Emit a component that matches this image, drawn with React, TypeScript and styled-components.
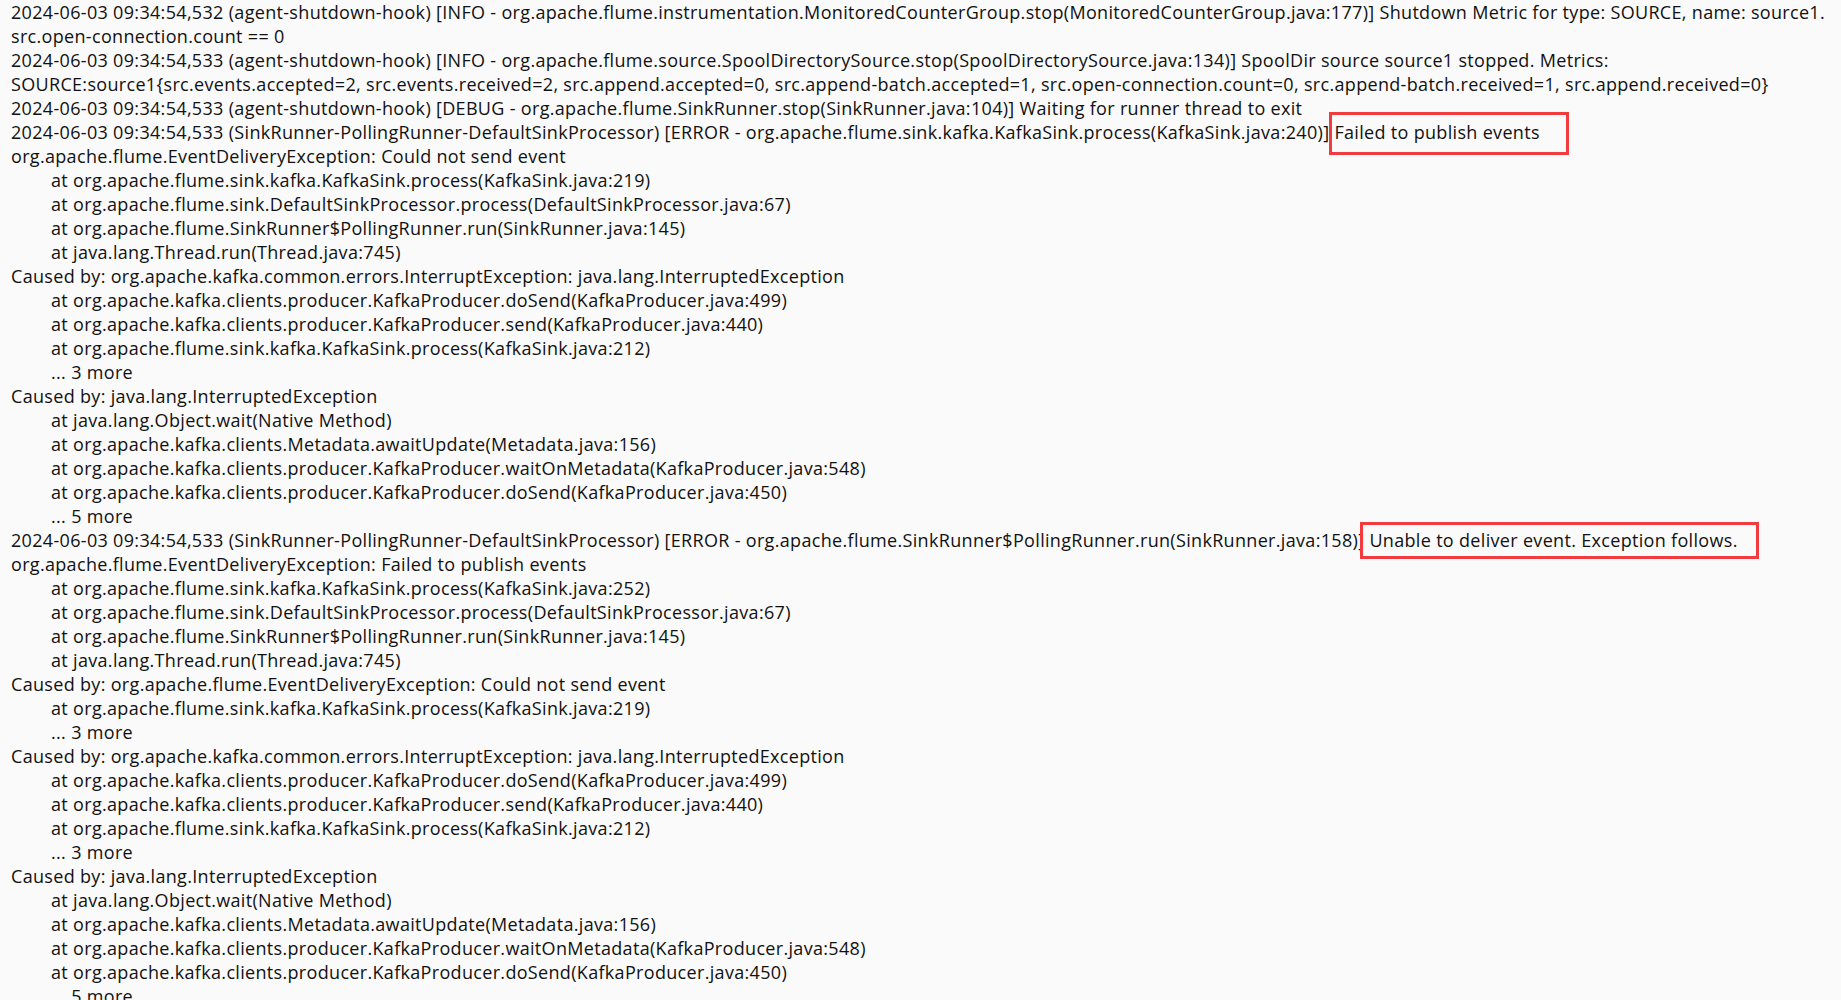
import React from "react";
import styled, { createGlobalStyle } from "styled-components";

const GlobalStyle = createGlobalStyle`
  html, body {
    margin: 0;
    padding: 0;
    background: #fafafa;
  }
  body {
    font-family: "Open Sans", "Noto Sans", "Noto Sans CJK SC", sans-serif;
  }
`;

const Page = styled.main`
  min-height: 1000px;
  background: #fafafa;
  padding: 0 0 0 11px;
  box-sizing: border-box;
  overflow: hidden;
`;

const LogLine = styled.div<{ $indent: number }>`
  font-family: "Open Sans", "Noto Sans", sans-serif;
  font-size: 18px;
  letter-spacing: 0.32px;
  line-height: 24px;
  height: 24px;
  color: #111;
  white-space: pre;
  padding-left: ${(p) => p.$indent}px;
`;

const Marked = styled.span<{ $l: number; $t: number; $r: number; $b: number }>`
  position: relative;
  &::after {
    content: "";
    position: absolute;
    left: ${(p) => p.$l}px;
    top: ${(p) => p.$t}px;
    right: ${(p) => p.$r}px;
    bottom: ${(p) => p.$b}px;
    border: 3px solid #f23b3f;
    pointer-events: none;
  }
`;

type Line = {
  text: string;
  indent?: boolean;
  mark?: { text: string; l: number; t: number; r: number; b: number };
};

const lines: Line[] = [
  {
    text:
      "2024-06-03 09:34:54,532 (agent-shutdown-hook) [INFO - org.apache.flume.instrumentation.MonitoredCounterGroup.stop(MonitoredCounterGroup.java:177)] Shutdown Metric for type: SOURCE, name: source1.",
  },
  { text: "src.open-connection.count == 0" },
  {
    text:
      "2024-06-03 09:34:54,533 (agent-shutdown-hook) [INFO - org.apache.flume.source.SpoolDirectorySource.stop(SpoolDirectorySource.java:134)] SpoolDir source source1 stopped. Metrics:",
  },
  {
    text:
      "SOURCE:source1{src.events.accepted=2, src.events.received=2, src.append.accepted=0, src.append-batch.accepted=1, src.open-connection.count=0, src.append-batch.received=1, src.append.received=0}",
  },
  {
    text:
      "2024-06-03 09:34:54,533 (agent-shutdown-hook) [DEBUG - org.apache.flume.SinkRunner.stop(SinkRunner.java:104)] Waiting for runner thread to exit",
  },
  {
    text:
      "2024-06-03 09:34:54,533 (SinkRunner-PollingRunner-DefaultSinkProcessor) [ERROR - org.apache.flume.sink.kafka.KafkaSink.process(KafkaSink.java:240)] ",
    mark: { text: "Failed to publish events", l: -5, t: -8, r: -29, b: -11 },
  },
  { text: "org.apache.flume.EventDeliveryException: Could not send event" },
  { text: "at org.apache.flume.sink.kafka.KafkaSink.process(KafkaSink.java:219)", indent: true },
  { text: "at org.apache.flume.sink.DefaultSinkProcessor.process(DefaultSinkProcessor.java:67)", indent: true },
  { text: "at org.apache.flume.SinkRunner$PollingRunner.run(SinkRunner.java:145)", indent: true },
  { text: "at java.lang.Thread.run(Thread.java:745)", indent: true },
  { text: "Caused by: org.apache.kafka.common.errors.InterruptException: java.lang.InterruptedException" },
  { text: "at org.apache.kafka.clients.producer.KafkaProducer.doSend(KafkaProducer.java:499)", indent: true },
  { text: "at org.apache.kafka.clients.producer.KafkaProducer.send(KafkaProducer.java:440)", indent: true },
  { text: "at org.apache.flume.sink.kafka.KafkaSink.process(KafkaSink.java:212)", indent: true },
  { text: "... 3 more", indent: true },
  { text: "Caused by: java.lang.InterruptedException" },
  { text: "at java.lang.Object.wait(Native Method)", indent: true },
  { text: "at org.apache.kafka.clients.Metadata.awaitUpdate(Metadata.java:156)", indent: true },
  { text: "at org.apache.kafka.clients.producer.KafkaProducer.waitOnMetadata(KafkaProducer.java:548)", indent: true },
  { text: "at org.apache.kafka.clients.producer.KafkaProducer.doSend(KafkaProducer.java:450)", indent: true },
  { text: "... 5 more", indent: true },
  {
    text:
      "2024-06-03 09:34:54,533 (SinkRunner-PollingRunner-DefaultSinkProcessor) [ERROR - org.apache.flume.SinkRunner$PollingRunner.run(SinkRunner.java:158)] ",
    mark: { text: "Unable to deliver event. Exception follows.", l: -9, t: -6, r: -21, b: -7 },
  },
  { text: "org.apache.flume.EventDeliveryException: Failed to publish events" },
  { text: "at org.apache.flume.sink.kafka.KafkaSink.process(KafkaSink.java:252)", indent: true },
  { text: "at org.apache.flume.sink.DefaultSinkProcessor.process(DefaultSinkProcessor.java:67)", indent: true },
  { text: "at org.apache.flume.SinkRunner$PollingRunner.run(SinkRunner.java:145)", indent: true },
  { text: "at java.lang.Thread.run(Thread.java:745)", indent: true },
  { text: "Caused by: org.apache.flume.EventDeliveryException: Could not send event" },
  { text: "at org.apache.flume.sink.kafka.KafkaSink.process(KafkaSink.java:219)", indent: true },
  { text: "... 3 more", indent: true },
  { text: "Caused by: org.apache.kafka.common.errors.InterruptException: java.lang.InterruptedException" },
  { text: "at org.apache.kafka.clients.producer.KafkaProducer.doSend(KafkaProducer.java:499)", indent: true },
  { text: "at org.apache.kafka.clients.producer.KafkaProducer.send(KafkaProducer.java:440)", indent: true },
  { text: "at org.apache.flume.sink.kafka.KafkaSink.process(KafkaSink.java:212)", indent: true },
  { text: "... 3 more", indent: true },
  { text: "Caused by: java.lang.InterruptedException" },
  { text: "at java.lang.Object.wait(Native Method)", indent: true },
  { text: "at org.apache.kafka.clients.Metadata.awaitUpdate(Metadata.java:156)", indent: true },
  { text: "at org.apache.kafka.clients.producer.KafkaProducer.waitOnMetadata(KafkaProducer.java:548)", indent: true },
  { text: "at org.apache.kafka.clients.producer.KafkaProducer.doSend(KafkaProducer.java:450)", indent: true },
  { text: "... 5 more", indent: true },
];

export default function App() {
  return (
    <>
      <GlobalStyle />
      <Page>
        {lines.map((line, i) => (
          <LogLine key={i} $indent={line.indent ? 40 : 0}>
            {line.text}
            {line.mark && (
              <Marked $l={line.mark.l} $t={line.mark.t} $r={line.mark.r} $b={line.mark.b}>
                {line.mark.text}
              </Marked>
            )}
          </LogLine>
        ))}
      </Page>
    </>
  );
}
